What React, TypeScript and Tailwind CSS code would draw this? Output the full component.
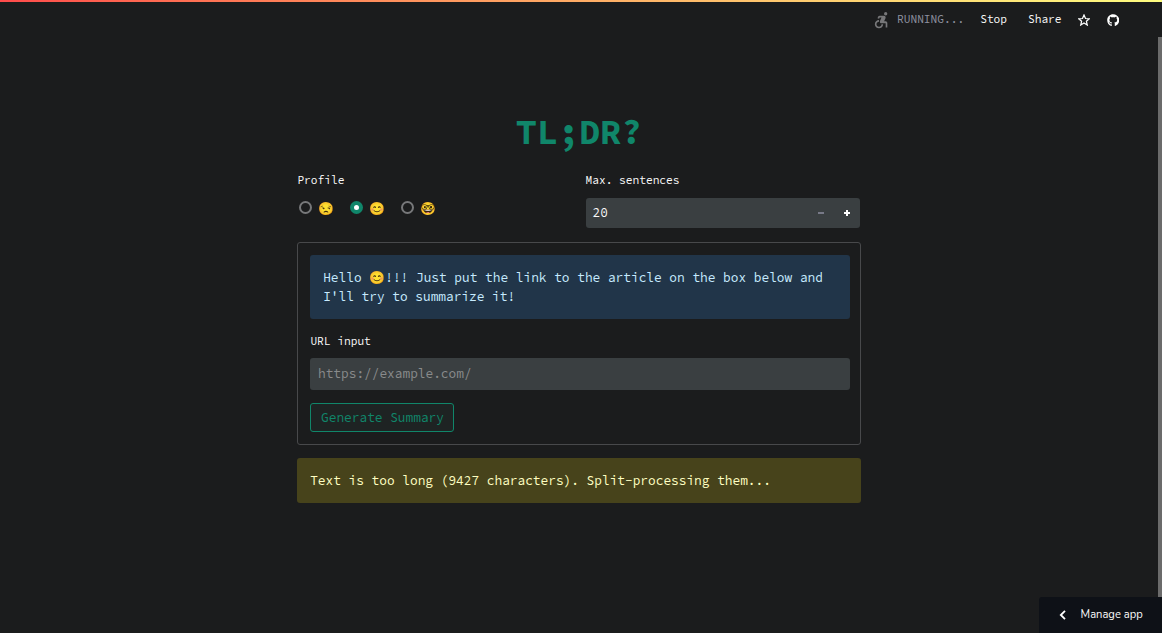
import { FaGithub } from "react-icons/fa";
import { MdAccessibleForward } from "react-icons/md";

const HELLO = "Hello 😊!!! Just put the link to the article on the box below and I'll try to summarize it!";
const PROFILES = ["😒", "😊", "🤓"];

function Radio({ emoji, checked }: { emoji: string; checked: boolean }) {
  return (
    <label className="flex w-[51px] items-start">
      <span
        className={
          checked
            ? "mt-[3px] flex h-[13px] w-[13px] items-center justify-center rounded-full bg-[#10866a]"
            : "mt-[3px] h-[13px] w-[13px] rounded-full border-2 border-[#77787a]"
        }
      >
        {checked && <span className="h-[5px] w-[5px] rounded-full bg-white" />}
      </span>
      <span className="ml-[6.4px] text-[12.8px] leading-5">{emoji}</span>
    </label>
  );
}

function Header() {
  return (
    <header className="flex h-[38px] items-center border-t-2 border-transparent pl-[871px] text-[11.2px] leading-4">
      <MdAccessibleForward className="h-[20px] w-[21px] text-[#777779]" />
      <span className="ml-[5px] w-[83.2px] pb-[2px] text-[#8f92a0]">RUNNING...</span>
      <span className="w-[47.8px] pb-[2px]">Stop</span>
      <span className="w-[50px] pb-[2px]">Share</span>
      <svg viewBox="0 0 24 24" className="h-3 w-3 fill-none stroke-white stroke-[2.5]">
        <path d="M12 2l3 7 7.5.6-5.7 5 1.7 7.4-6.5-4-6.5 4 1.7-7.4-5.7-5L9 9z" />
      </svg>
      <FaGithub className="ml-[17px] h-[12.5px] w-[12.5px] text-white" />
    </header>
  );
}

export default function App() {
  return (
    <div className="relative h-[633px] w-full overflow-hidden bg-[#1b1c1d] font-['Source_Code_Pro','Liberation_Mono',monospace] text-[12.8px] text-[#fafafa]">
      <div className="absolute inset-x-0 top-0 h-[2px] bg-linear-to-r from-[#ff4b4b] to-[#fffd80]" />
      <Header />
      <div className="pr-1">
        <main className="mx-auto w-[564px] pt-[72px]">
          <h1 className="h-[63px] text-center text-[35.2px] leading-[44px] font-bold text-[#10866a]">TL;DR?</h1>
          <section className="flex h-[69px] gap-[13.5px]">
            <div className="w-[275px]">
              <p className="pl-[0.4px] text-[11.2px] leading-[15px]">Profile</p>
              <div className="mt-[10px] ml-[2px] flex">
                {PROFILES.map((emoji, i) => (
                  <Radio key={emoji} emoji={emoji} checked={i === 1} />
                ))}
              </div>
            </div>
            <div className="w-[275px]">
              <p className="text-[11.2px] leading-[15px]">Max. sentences</p>
              <div className="mt-[10px] flex h-[30px] w-[274px] items-center rounded-[3px] bg-[#3a3f41] pl-[7px]">
                <span className="flex-1">20</span>
                <svg viewBox="0 0 6 6" className="mr-5 h-[6px] w-[6px] fill-[#777987]">
                  <path d="M0 2h6v2H0z" />
                </svg>
                <svg viewBox="0 0 6 6" className="mr-[10px] h-[6px] w-[6px] fill-white">
                  <path d="M2 0h2v2h2v2H4v2H2V4H0V2h2z" />
                </svg>
              </div>
            </div>
          </section>
          <section className="h-[203px] rounded-[3px] border border-[#48494b] px-3 pt-3">
            <div className="h-16 w-[540px] rounded-[3px] bg-[#213549] py-[13px] pr-[12px] pl-[13.2px] leading-[19.2px] text-[#c7ebff]">
              {HELLO}
            </div>
            <p className="mt-[15px] pl-[0.4px] text-[11.2px] leading-[15px]">URL input</p>
            <div className="mt-[9px] flex h-8 w-[540px] items-center rounded-[3px] bg-[#3a3f41] pl-2 text-[#898b8c]">
              https://example.com/
            </div>
            <button className="mt-[13px] flex h-[29px] w-36 items-center justify-center rounded-[3px] border border-[#10866a] bg-[#1e2323] pl-px text-[#10866a]">
              Generate Summary
            </button>
          </section>
          <div className="mt-[13px] flex h-[45px] items-center rounded-[3px] bg-[#47431b] pl-[13.2px] text-[#ffffc2]">
            Text is too long (9427 characters). Split-processing them...
          </div>
        </main>
      </div>
      <div className="absolute top-[37px] right-0 h-[560px] w-1 bg-[#6b6b6b]" />
      <button className="absolute right-0 bottom-0 flex h-9 w-[123px] items-center rounded-tl-[3px] bg-[#0e1117] pl-5 font-['Nunito_Sans','Noto_Sans',sans-serif] text-[11.2px]">
        <svg viewBox="0 0 8 10" className="h-[10px] w-2 fill-none stroke-white stroke-[1.8]">
          <path d="M6 .8L1.800 5 6 9.200" />
        </svg>
        <span className="mt-px ml-[13.6px]">Manage app</span>
      </button>
    </div>
  );
}
